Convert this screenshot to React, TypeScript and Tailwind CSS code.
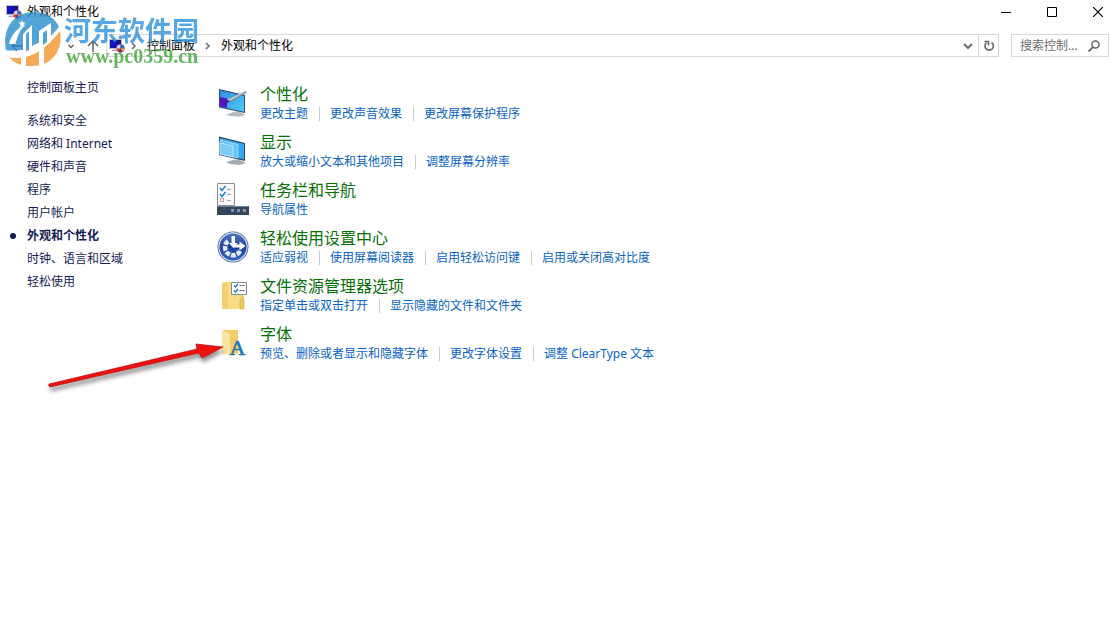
import React from "react";

const PersonalizeIcon = () => (
  <svg viewBox="0 0 32 32" className="h-8 w-8" aria-hidden="true">
    <defs>
      <linearGradient id="pz" x1="0" y1="0" x2="1" y2="1">
        <stop offset="0" stopColor="#2f8fe6" />
        <stop offset="1" stopColor="#4ccdf5" />
      </linearGradient>
    </defs>
    <path d="M14 25l9-1 1 3 5 1-6 1.500-9-1 3-1.500z" fill="#c3c8cc" />
    <path d="M9 27.500l5-1.500 10-.5 4 2-6 2-9-.5z" fill="#b4babf" />
    <path d="M2 2l26 6v18L2 20.500z" fill="#35506b" />
    <path d="M3 3.500l24 5.500v15.800L3 19.500z" fill="url(#pz)" />
    <path d="M3 10l7 1.500v9.400L3 19.500z" fill="#5a12c8" />
    <path d="M9 14l3-2.500L28.500 4 30 5.500 13 15z" fill="#7e878c" />
    <path d="M11 12.500L28.500 4l1 .5L13 13.800z" fill="#c5cbd0" />
    <path d="M7 17l2.500-4 3.500 1.500z" fill="#30206c" />
  </svg>
);

const DisplayIcon = () => (
  <svg viewBox="0 0 32 32" className="h-8 w-8" aria-hidden="true">
    <path d="M14 25l9-1 1 3 5 1.500-6 1.500-9-1 3-1.500z" fill="#b8bec3" />
    <path d="M9 27l6-1.500 9 0 4 2-6 2-9-.5z" fill="#a3abb1" />
    <path d="M2 1.500L28 8v18L2 20z" fill="#2a4864" />
    <path d="M3 3l24 6v15.500L3 19z" fill="#35a7ec" />
    <path d="M3 5l18 4.500V23L3 19z" fill="#6ac4f5" stroke="#b3e5fc" strokeWidth="0.8" />
    <path d="M3 8l13 3.200V22L3 19z" fill="#7bcdf8" stroke="#c3ecff" strokeWidth="0.8" />
  </svg>
);

const TaskbarIcon = () => (
  <svg viewBox="0 0 32 32" className="h-8 w-8" aria-hidden="true">
    <path d="M.5.500h17v22H.5z" fill="#fafafa" stroke="#8c8c8c" />
    <path d="M3 5l2 2.500L8.500 3M3 11l2 2.500L8.500 9" fill="none" stroke="#2589c6" strokeWidth="1.600" />
    <path d="M3.500 15.500h3v3h-3z" fill="#fff" stroke="#b58c8c" strokeWidth="0.8" />
    <path d="M10 6.500h4M10 11.500h4M10 17.500h4" stroke="#a9a9a9" />
    <path d="M0 23h32v9H0z" fill="#34465e" />
    <path d="M0 23h32v1H0z" fill="#6b7f96" />
    <path d="M14 26h3v3h-3zM20 26h3v3h-3zM26 26h3v3h-3z" fill="#8496ac" />
  </svg>
);

const EaseIcon = () => (
  <svg viewBox="0 0 32 32" className="h-8 w-8" aria-hidden="true">
    <defs>
      <linearGradient id="ease" x1="0" y1="0" x2="0" y2="1">
        <stop offset="0" stopColor="#5277c4" />
        <stop offset="0.5" stopColor="#1c3f98" />
        <stop offset="1" stopColor="#2f66cc" />
      </linearGradient>
    </defs>
    <circle cx="16" cy="16" r="15.500" fill="#4b6494" />
    <circle cx="16" cy="16" r="14.700" fill="#d3dff0" />
    <circle cx="16" cy="16" r="13.500" fill="url(#ease)" />
    <path d="M11 10A8 8 0 1 0 23.500 19" fill="none" stroke="#e3ecfa" strokeWidth="4.500" strokeDasharray="4.600 1.300" />
    <path d="M14.500 5h3.500v7h2.500l-4.200 5-4.300-5h2.500z" fill="#fff" />
    <path d="M16 13.500h6.500V10.500l6 4.500-6 4.500v-3H16z" fill="#fff" />
  </svg>
);

const ExplorerIcon = () => (
  <svg viewBox="0 0 32 32" className="h-8 w-8" aria-hidden="true">
    <path d="M5 4l5-1v27l-5-1z" fill="#e7bd59" />
    <path d="M7 3h17l3 3v24H7z" fill="#f7dc83" />
    <path d="M5 4h4l2 3v23H5z" fill="#f3cf70" />
    <path d="M23 21l2-4 2 4v9h-4z" fill="#efc75f" stroke="#dcb04a" strokeWidth="0.700" />
    <path d="M14.500 3.500h15v12h-15z" fill="#fff" stroke="#7a8c98" />
    <path d="M17 6.500l1.500 1.500L21 5M17 11.500l1.500 1.500 2.500-3" fill="none" stroke="#1c70b8" strokeWidth="1.200" />
    <path d="M22.500 6.500h2M25.500 6.500h2M22.500 11.500h2M25.500 11.500h2" stroke="#454f58" />
  </svg>
);

const FontsIcon = () => (
  <svg viewBox="0 0 32 32" className="h-8 w-8 overflow-visible" aria-hidden="true">
    <path d="M5 4l4-1v24l-4-1z" fill="#e3b853" />
    <path d="M7 3h14v24H7z" fill="#f3cd6c" />
    <path d="M5 3l8 4v22l-8-3z" fill="#fbe5a2" />
    <text x="20.500" y="28" textAnchor="middle" fill="#1c78ad" stroke="#1c78ad" strokeWidth="0.700" className="font-['Liberation_Serif',serif] text-[22px] leading-none">
      A
    </text>
  </svg>
);

const PanelIcon = () => (
  <svg viewBox="0 0 16 16" className="h-4 w-4 shrink-0" aria-hidden="true">
    <path d="M.5 1.500h12v9H.5z" fill="#1713a8" stroke="#b9bed2" />
    <path d="M2 3h4v5H2z" fill="#1010dd" />
    <path d="M7 2h5v3H7z" fill="#12127a" />
    <path d="M2 13h6v-1.500H4z" fill="#a2a5ad" />
    <circle cx="11.500" cy="10.500" r="4" fill="#d93a2f" />
    <path d="M11.500 10.500V6.500a4 4 0 0 0-4 4z" fill="#d8d6f3" />
    <path d="M11.500 10.500h4a4 4 0 0 0-4-4z" fill="#2d65d8" />
    <path d="M11.500 10.500h4l-2 3.500z" fill="#e7b63a" />
    <path d="M11.500 10.500l2 3.500-2 .5-2-.5z" fill="#4b37a5" />
  </svg>
);

const Chevron = ({ down = false }: { down?: boolean }) => (
  <svg viewBox="0 0 10 10" className="h-2.5 w-2.5 shrink-0" aria-hidden="true">
    <path d={down ? "M1 3l4 4 4-4" : "M3 2l3 3-3 3"} fill="none" stroke="#6b6b6b" strokeWidth={down ? 2 : 1.5} />
  </svg>
);

const categories = [
  { title: "个性化", Icon: PersonalizeIcon, links: ["更改主题", "更改声音效果", "更改屏幕保护程序"] },
  { title: "显示", Icon: DisplayIcon, links: ["放大或缩小文本和其他项目", "调整屏幕分辨率"] },
  { title: "任务栏和导航", Icon: TaskbarIcon, links: ["导航属性"] },
  { title: "轻松使用设置中心", Icon: EaseIcon, links: ["适应弱视", "使用屏幕阅读器", "启用轻松访问键", "启用或关闭高对比度"] },
  { title: "文件资源管理器选项", Icon: ExplorerIcon, links: ["指定单击或双击打开", "显示隐藏的文件和文件夹"] },
  { title: "字体", Icon: FontsIcon, links: ["预览、删除或者显示和隐藏字体", "更改字体设置", "调整 ClearType 文本"] },
];

const sections = ["系统和安全", "网络和 Internet", "硬件和声音", "程序", "用户帐户", "外观和个性化", "时钟、语言和区域", "轻松使用"];
const current = "外观和个性化";

const Watermark = () => (
  <div className="pointer-events-none absolute left-1 top-2 flex opacity-80">
    <svg viewBox="0 0 60 60" className="h-15 w-15" aria-hidden="true">
      <path d="M1 34C1 16 13 4 30 4c12 0 21 6 25 15L46 29 20 42 2 43z" fill="#278dcc" />
      <path d="M4 47c19 3 39-6 52-24 3 16-5 30-19 34-14 3-28 0-33-10z" fill="#f39530" />
      <path d="M1 42c20 4 42-5 54-23-8 21-30 35-52 30z" fill="#fff" />
      <path d="M5 36c2-9 8-16 17-20-6 6-9 12-10 20z" fill="#fff" />
      <path d="M19 26l9-9v25l-9 3zM35 23l12-8v19l-12 7z" fill="#fff" />
      <path d="M22 26l3-3v19l-3 1zM39 25l4-3v12l-4 3z" fill="#278dcc" />
      <path d="M17 46h5v12h-5zM35 42l5-2v17h-5z" fill="#fff" />
      <path d="M18 12l1 2.500h2.800l-2.200 1.800.8 2.700-2.400-1.600-2.400 1.600.8-2.700-2.200-1.800H17z" fill="#fff" />
    </svg>
    <div className="pt-1">
      <div className="font-['Noto_Sans_CJK_SC',sans-serif] text-[27px] font-bold leading-9 text-[#2b91dc]">河东软件园</div>
      <div className="-mt-1 pl-0.5 font-['Liberation_Serif',serif] text-[20px] font-bold leading-6 text-[#3fa535]">www.pc0359.cn</div>
    </div>
  </div>
);

export default function App() {
  return (
    <div className="relative min-h-screen overflow-hidden bg-white font-['Noto_Sans','Noto_Sans_CJK_SC',sans-serif] text-xs text-black">
      <header className="flex h-6 items-center pl-1.5">
        <PanelIcon />
        <h1 className="ml-[5px] flex-1 leading-4">外观和个性化</h1>
        <button aria-label="最小化" className="flex h-6 w-11 items-center justify-center">
          <svg viewBox="0 0 10 10" className="h-2.5 w-2.5"><path d="M0 5.500h10" stroke="#000" /></svg>
        </button>
        <button aria-label="最大化" className="flex h-6 w-12 items-center justify-center">
          <svg viewBox="0 0 10 10" className="h-2.5 w-2.5"><path d="M.5.500h9v9h-9z" fill="none" stroke="#000" /></svg>
        </button>
        <button aria-label="关闭" className="mr-[-10px] flex h-6 w-11 items-center justify-center">
          <svg viewBox="0 0 10 10" className="h-2.5 w-2.5"><path d="M0 0l10 10M10 0L0 10" stroke="#000" strokeWidth="1.200" /></svg>
        </button>
      </header>

      <nav aria-label="地址栏" className="mt-2.5 flex h-[23px] items-center pr-px">
        <button aria-label="后退" className="ml-2.5 flex h-5 w-5 items-center">
          <svg viewBox="0 0 14 14" className="h-3.5 w-3.5"><path d="M13 7H2m5-5L2 7l5 5" fill="none" stroke="#555" strokeWidth="1.500" /></svg>
        </button>
        <button aria-label="最近浏览的位置" className="ml-9">
          <svg viewBox="0 0 10 10" className="h-2.5 w-2.5"><path d="M2.500 4L5 6.500 7.500 4" fill="none" stroke="#6b6b6b" strokeWidth="1.500" /></svg>
        </button>
        <button aria-label="向上" className="ml-2.5 w-3.5">
          <svg viewBox="0 0 14 14" className="h-3.5 w-3.5"><path d="M7 13V2M2 7l5-5 5 5" fill="none" stroke="#666" strokeWidth="1.500" /></svg>
        </button>
        <div className="ml-1.5 flex h-full min-w-0 flex-1 items-center border border-[#d9d9d9] pl-0.5">
          <PanelIcon />
          <span className="ml-1"><Chevron /></span>
          <a href="#panel" className="ml-2 whitespace-nowrap">控制面板</a>
          <span className="ml-2"><Chevron /></span>
          <a href="#appearance" className="ml-2 flex-1 whitespace-nowrap">外观和个性化</a>
          <button aria-label="以前的位置" className="flex w-5 items-center justify-center"><Chevron down /></button>
          <button aria-label="刷新" className="flex h-full w-5 items-center justify-center border-l border-[#d9d9d9]">
            <svg viewBox="0 0 12 12" className="h-3 w-3">
              <path d="M8.500 2.500a4.200 4.200 0 1 1-5 .2" fill="none" stroke="#666" strokeWidth="1.600" />
              <path d="M1.500 1.500h4v4" fill="none" stroke="#666" strokeWidth="1.600" />
            </svg>
          </button>
        </div>
        <label className="ml-3 flex h-full w-[98px] items-center border border-[#d9d9d9] pl-2 pr-2">
          <input type="text" aria-label="搜索控制面板" placeholder="搜索控制..." className="w-0 flex-1 outline-none placeholder:text-[#6d6d6d]" />
          <svg viewBox="0 0 12 12" className="h-3 w-3" aria-hidden="true">
            <circle cx="7.500" cy="4.500" r="3.500" fill="none" stroke="#666" strokeWidth="1.500" />
            <path d="M5 7L.5 11.500" stroke="#666" strokeWidth="1.800" />
          </svg>
        </label>
      </nav>

      <div className="flex pt-[19px]">
        <aside className="w-[217px] shrink-0 text-[#151c55]">
          <a href="#home" className="ml-[27px] block leading-[23px]">控制面板主页</a>
          <ul className="mt-2.5">
            {sections.map((name) => (
              <li key={name} className="flex h-[23px] items-center">
                <span className="flex w-[27px] pl-2.5">
                  {name === current && <span className="h-1.5 w-1.5 rounded-full bg-[#151c55]" />}
                </span>
                <a href="#section" className={name === current ? "font-bold" : ""}>{name}</a>
              </li>
            ))}
          </ul>
        </aside>

        <main className="flex min-w-0 flex-1 flex-col gap-2 pt-2">
          {categories.map(({ title, Icon, links }) => (
            <section key={title} className="flex gap-[11px]">
              <div className="shrink-0 pt-[3px]"><Icon /></div>
              <div>
                <h2 className="text-base leading-5"><a href="#category" className="text-[#087008]">{title}</a></h2>
                <ul className="flex leading-5 text-[#0763c4]">
                  {links.map((link, i) => (
                    <li key={link} className="flex items-center whitespace-nowrap">
                      {i > 0 && <span className="ml-[11px] mr-2.5 h-3.5 w-px bg-[#c9c9c9]" />}
                      <a href="#task">{link}</a>
                    </li>
                  ))}
                </ul>
              </div>
            </section>
          ))}
        </main>
      </div>

      <Watermark />
      <svg viewBox="0 0 184 56" className="pointer-events-none absolute left-[44px] top-[340px] h-14 w-[184px] drop-shadow-[1px_4px_2px_rgba(0,0,0,0.45)]" aria-hidden="true">
        <path d="M5 44l148-35-1-5 27 3-21 11-3-5L6 47q-2-1-1-3z" fill="#ee1111" stroke="#b50d0d" strokeWidth="0.700" />
      </svg>
    </div>
  );
}
